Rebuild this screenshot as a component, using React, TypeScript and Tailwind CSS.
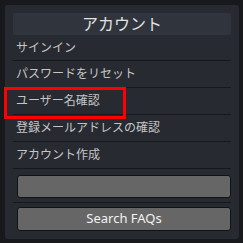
export default function App() {
  const items = ["パスワードをリセット", "ユーザー名確認", "登録メールアドレスの確認", "アカウント作成"];
  return (
    <div className="relative w-[243px] h-[243px] bg-[#17191c] overflow-hidden pt-[5px] pl-[5px]" style={{ fontFamily: '"Noto Sans", "Noto Sans CJK JP", sans-serif' }}>
      <div className="w-[234px] h-[234px] bg-[#272a31] rounded-[3px] px-2 pt-2 pb-2 flex flex-col">
        <div className="h-[22px] bg-[#30343c] rounded-[2px] flex items-center justify-center text-[16px] leading-none text-[#e2e2e2]">アカウント</div>
        <div className="h-[26px] border-b border-[#16181b] flex items-center pl-[3px] text-[12px] text-[#c6c6c6]">サインイン</div>
        {items.map((t) => (
          <div key={t} className="h-[27px] border-b border-[#16181b] flex items-center pl-[3px] text-[12px] text-[#c6c6c6]">{t}</div>
        ))}
        <div className="pt-[6px] pb-[4px] border-b border-[#16181b] pl-[4px]">
          <div className="h-[23px] bg-[#666666] border border-[#111214] rounded-[3px]"></div>
        </div>
        <div className="pt-[4px] pl-[4px]">
          <div className="h-[24px] bg-[#666666] border border-[#111214] rounded-[3px] flex items-center justify-center text-[13px] text-[#f2f2f2]">Search FAQs</div>
        </div>
      </div>
      <div className="absolute left-[4px] top-[87px] w-[122px] h-[32px] border-[3px] border-[#ff0000]"></div>
    </div>
  );
}
